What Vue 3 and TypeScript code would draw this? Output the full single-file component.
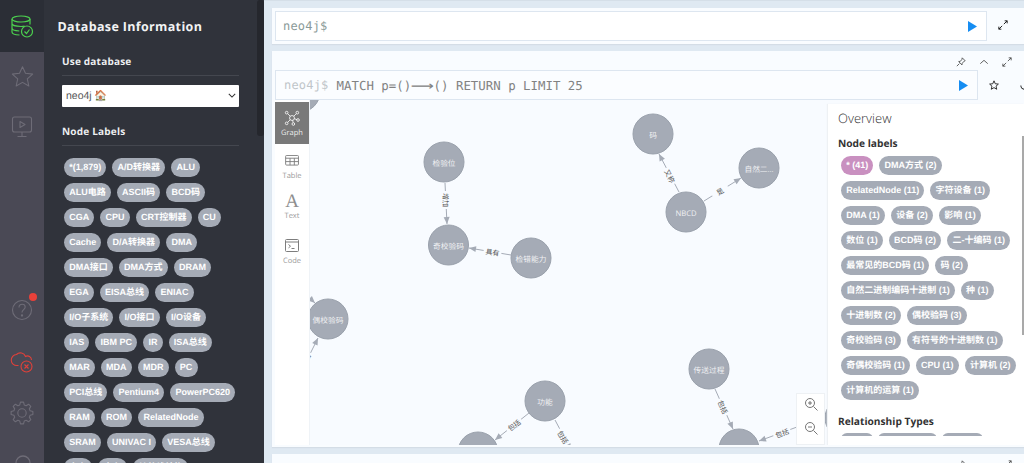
<script setup lang="ts">
const dbLabels: string[][] = [
  ['*(1,879)', 'A/D转换器', 'ALU'],
  ['ALU电路', 'ASCII码', 'BCD码'],
  ['CGA', 'CPU', 'CRT控制器', 'CU'],
  ['Cache', 'D/A转换器', 'DMA'],
  ['DMA接口', 'DMA方式', 'DRAM'],
  ['EGA', 'EISA总线', 'ENIAC'],
  ['I/O子系统', 'I/O接口', 'I/O设备'],
  ['IAS', 'IBM PC', 'IR', 'ISA总线'],
  ['MAR', 'MDA', 'MDR', 'PC'],
  ['PCI总线', 'Pentium4', 'PowerPC620'],
  ['RAM', 'ROM', 'RelatedNode'],
  ['SRAM', 'UNIVAC I', 'VESA总线'],
  ['主存', '内存', '单总线结构']
]
const overview: string[][] = [
  ['RelatedNode (11)', '字符设备 (1)'],
  ['DMA (1)', '设备 (2)', '影响 (1)'],
  ['数位 (1)', 'BCD码 (2)', '二-十编码 (1)'],
  ['最常见的BCD码 (1)', '码 (2)'],
  ['自然二进制编码十进制 (1)', '种 (1)'],
  ['十进制数 (2)', '偶校验码 (3)'],
  ['奇校验码 (3)', '有符号的十进制数 (1)'],
  ['奇偶校验码 (1)', 'CPU (1)', '计算机 (2)'],
  ['计算机的运算 (1)']
]
const nodes = [
  { x: 299, y: 92, t: '' },
  { x: 443, y: 162, t: '检验位' },
  { x: 447.5, y: 245, t: '奇校验码' },
  { x: 530, y: 258, t: '检错能力' },
  { x: 327, y: 319, t: '偶校验码' },
  { x: 544, y: 401, t: '功能' },
  { x: 477, y: 452, t: '' },
  { x: 652, y: 134, t: '码' },
  { x: 758, y: 168, t: '自然二…' },
  { x: 685, y: 212, t: 'NBCD' },
  { x: 708, y: 369, t: '传送过程' },
  { x: 738, y: 449, t: '' },
  { x: 844, y: 418, t: '' }
]
const links = [
  { x1: 444, y1: 183, x2: 446, y2: 224, lx: 444.5, ly: 200, a: 90, t: '增加' },
  { x1: 510, y1: 255, x2: 468, y2: 248, lx: 491.5, ly: 252, a: 8, t: '具有' },
  { x1: 678, y1: 192, x2: 658, y2: 154, lx: 669, ly: 176, a: 62, t: '又称' },
  { x1: 703, y1: 201, x2: 740, y2: 178, lx: 719, ly: 191, a: -32, t: '是' },
  { x1: 528, y1: 413, x2: 494, y2: 440, lx: 513, ly: 425, a: -37, t: '包括' },
  { x1: 554, y1: 420, x2: 570, y2: 450, lx: 562, ly: 437, a: 60, t: '包括' },
  { x1: 714, y1: 389, x2: 732, y2: 429, lx: 722, ly: 407, a: 66, t: '包括' },
  { x1: 796, y1: 427, x2: 758, y2: 441, lx: 781, ly: 433, a: -20, t: '包括' },
  { x1: 300, y1: 290, x2: 314, y2: 303, lx: 0, ly: 0, a: 0, t: '' },
  { x1: 306, y1: 360, x2: 317, y2: 338, lx: 304, ly: 360, a: -60, t: '包括' }
]
function head(l: { x1: number; y1: number; x2: number; y2: number }): string {
  const d = Math.hypot(l.x2 - l.x1, l.y2 - l.y1)
  const ux = (l.x2 - l.x1) / d
  const uy = (l.y2 - l.y1) / d
  const bx = l.x2 - ux * 7
  const by = l.y2 - uy * 7
  return `${l.x2},${l.y2} ${bx - uy * 3},${by + ux * 3} ${bx + uy * 3},${by - ux * 3}`
}
function gear(): string {
  const teeth = 8
  const pts: string[] = []
  for (let i = 0; i < teeth; i++) {
    const c = (i / teeth) * Math.PI * 2
    const seq: [number, number][] = [[-0.27, 8.4], [-0.14, 11], [0.14, 11], [0.27, 8.4]]
    for (const [o, r] of seq) {
      pts.push(`${(12 + r * Math.cos(c + o)).toFixed(2)} ${(12 + r * Math.sin(c + o)).toFixed(2)}`)
    }
  }
  return 'M' + pts.join('L') + 'Z'
}
const gearPath = gear()
</script>

<template>
  <div class="page">
    <nav class="rail">
      <div class="rail-top">
        <svg viewBox="0 0 24 24" width="24" height="24" fill="none" stroke="#4cd04f" stroke-width="1.2">
          <ellipse cx="11" cy="5" rx="9" ry="3" />
          <path d="M2 5v13c0 1.600 3.400 2.900 7.500 3M20 5v5.500M2 9.500c0 1.700 4 3 9 3 1.300 0 2.500-.1 3.600-.3M2 14c0 1.600 3.300 2.800 7.300 3" />
          <circle cx="17" cy="17.500" r="5.500" />
          <path d="M14.500 17.500l2 2 3-4" />
        </svg>
      </div>
      <div class="rail-btn rail-star">
        <svg viewBox="0 0 24 24" width="23" height="23" fill="none" stroke="#6e6c77" stroke-width="1.100" stroke-linejoin="round">
          <path d="M12 1.800l3.100 6.900 7.500.8-5.600 5 1.600 7.400L12 18.100l-6.600 3.800L7 14.500l-5.600-5 7.500-.8z" />
        </svg>
      </div>
      <div class="rail-btn rail-play">
        <svg viewBox="0 0 24 24" width="24" height="24" fill="none" stroke="#6e6c77" stroke-width="1.100" stroke-linejoin="round">
          <rect x="2.500" y="2" width="19" height="15" rx="2" />
          <path d="M10 6.500l5 3-5 3zM12 17v4M7.500 21.500h9" />
        </svg>
      </div>
      <div class="rail-space"></div>
      <div class="rail-btn rail-help">
        <svg viewBox="0 0 24 24" width="24" height="24" fill="none" stroke="#6e6c77" stroke-width="1.100">
          <circle cx="12" cy="12" r="9.500" />
          <path d="M9 9.500c0-2 1.400-3.200 3.200-3.200 1.800 0 3 1.200 3 2.800 0 2.500-3.200 2.500-3.200 5.300" />
          <circle cx="12" cy="17.500" r=".6" />
        </svg>
        <span class="dot"></span>
      </div>
      <div class="rail-btn rail-cloud">
        <svg viewBox="0 0 24 24" width="24" height="24" fill="none" stroke="#e0413a" stroke-width="1.100">
          <path d="M8.500 15.500H7a5.500 5.500 0 0 1-.5-11A5.500 5.500 0 0 1 15.500 6.500a4 4 0 0 1 6 3.500" />
          <circle cx="16.500" cy="16.500" r="5.500" />
          <path d="M14.500 14.500l4 4M18.500 14.500l-4 4" />
        </svg>
      </div>
      <div class="rail-btn rail-gear">
        <svg viewBox="0 0 24 24" width="24" height="24" fill="none" stroke="#6e6c77" stroke-width="1.100" stroke-linejoin="round">
          <circle cx="12" cy="12" r="4.200" />
          <path :d="gearPath" />
        </svg>
      </div>
      <div class="rail-btn rail-search">
        <svg viewBox="0 0 24 24" width="24" height="24" fill="none" stroke="#6e6c77" stroke-width="1.300">
          <circle cx="13" cy="9" r="7" />
          <path d="M8 14l-6 7" />
        </svg>
      </div>
    </nav>

    <aside class="drawer">
      <h1 class="drawer-title">Database Information</h1>
      <h2 class="drawer-h">Use database</h2>
      <div class="select"><span>neo4j 🏠</span>
        <svg viewBox="0 0 10 6" width="8" height="5" fill="none" stroke="#333" stroke-width="1.300"><path d="M1 1l4 4 4-4" /></svg>
      </div>
      <h2 class="drawer-h second">Node Labels</h2>
      <div class="rows">
        <div v-for="(row, i) in dbLabels" :key="i" class="row">
          <span v-for="l in row" :key="l" class="pill">{{ l }}</span>
        </div>
      </div>
      <span class="drawer-scroll"></span>
    </aside>

    <main class="stream">
      <section class="frame frame-top">
        <div class="editor">
          <span class="prompt dark">neo4j$</span>
          <svg class="run" viewBox="0 0 10 12" width="9" height="11"><path d="M0 0l10 6-10 6z" fill="#168df2" /></svg>
        </div>
        <svg class="expand-top" viewBox="0 0 12 12" width="10" height="10" fill="none" stroke="#222" stroke-width="1.200"><path d="M7 5l4-4M8 1h3v3M5 7l-4 4M1 8v3h3" /></svg>
      </section>

      <section class="frame frame-main">
        <div class="acts">
          <svg viewBox="0 0 12 12" width="10" height="10" fill="none" stroke="#444" stroke-width="1"><path d="M7.500 1l3.500 3.500-1.200.5-2.300 2.500-.3 2-4-4 2-.3L7 3z M4 8l-3 3" /></svg>
          <svg viewBox="0 0 12 12" width="10" height="10" fill="none" stroke="#444" stroke-width="1"><path d="M1.500 8l4.500-4 4.500 4" /></svg>
          <svg viewBox="0 0 12 12" width="10" height="10" fill="none" stroke="#444" stroke-width="1"><path d="M7 5l4-4M8 1h3v3M5 7l-4 4M1 8v3h3" /></svg>
        </div>
        <div class="edit-row">
          <div class="editor main-ed">
            <span class="prompt">neo4j$</span>
            <span class="query">MATCH p=()<span class="arrow">⟶</span>() RETURN p LIMIT 25</span>
            <svg class="run" viewBox="0 0 10 12" width="9" height="11"><path d="M0 0l10 6-10 6z" fill="#168df2" /></svg>
          </div>
          <svg class="ed-star" viewBox="0 0 24 24" width="10" height="10" fill="none" stroke="#222" stroke-width="2.200" stroke-linejoin="round"><path d="M12 2l3 7 7.500.8-5.600 5 1.600 7.400L12 18.300l-6.500 3.900L7.100 14.800l-5.600-5L9 9z" /></svg>
          <svg class="ed-redo" viewBox="0 0 12 12" width="11" height="11" fill="none" stroke="#222" stroke-width="1.100"><path d="M2 6a4 4 0 1 0 8 0" /></svg>
        </div>
        <div class="result">
          <div class="tabs">
            <div class="tab tab-graph active">
              <svg viewBox="0 0 24 24" width="16" height="16" fill="none" stroke="#fff" stroke-width="1.200">
                <circle cx="12" cy="12" r="3.700" /><circle cx="4" cy="4" r="2" /><circle cx="20" cy="4" r="2" /><circle cx="4" cy="20" r="2" /><circle cx="14" cy="21" r="2" /><circle cx="21" cy="15" r="2" />
                <path d="M5.500 5.500l4 4M18.500 5.500l-4 4M5.500 18.500l4-4M13 15.500l.7 3.500M15.500 13l4 1.500" />
              </svg>
              <span>Graph</span>
            </div>
            <div class="tab tab-table">
              <svg viewBox="0 0 16 12" width="15" height="11" fill="none" stroke="#7d7d7d" stroke-width="1"><rect x=".5" y=".5" width="14" height="10.500" rx="1" /><path d="M.5 3.500h14M.5 7.200h14M5.300 3.500V11M10 3.500V11" /></svg>
              <span>Table</span>
            </div>
            <div class="tab tab-text">
              <span class="big-a">A</span>
              <span>Text</span>
            </div>
            <div class="tab tab-code">
              <svg viewBox="0 0 14 13" width="14" height="13" fill="none" stroke="#7d7d7d" stroke-width="1"><rect x=".5" y=".5" width="13" height="12" rx="1" /><path d="M.5 3h13M3.500 5.500l2 1.700-2 1.700M6.500 9.500h3" /></svg>
              <span>Code</span>
            </div>
          </div>
          <div class="graph">
            <svg class="graph-svg" viewBox="275 100 749 345" width="749" height="345">
              <g v-for="(l, i) in links" :key="'l' + i">
                <line :x1="l.x1" :y1="l.y1" :x2="l.x2" :y2="l.y2" stroke="#a5abb6" stroke-width="1" />
                <polygon :points="head(l)" fill="#a5abb6" />
                <g v-if="l.t" :transform="`translate(${l.lx} ${l.ly}) rotate(${l.a})`">
                  <rect x="-9" y="-5" width="18" height="10" fill="#f8fbff" />
                  <text class="rel" text-anchor="middle" y="3">{{ l.t }}</text>
                </g>
              </g>
              <g v-for="(n, i) in nodes" :key="'n' + i">
                <circle :cx="n.x" :cy="n.y" r="20" fill="#a5abb6" stroke="#9aa1ac" stroke-width="1" />
                <text class="node" :x="n.x" :y="n.y + 3.500" text-anchor="middle">{{ n.t }}</text>
              </g>
            </svg>
            <div class="zoom-box">
              <svg viewBox="0 0 14 14" width="14" height="14" fill="none" stroke="#666" stroke-width=".9"><circle cx="6" cy="6" r="4.500" /><path d="M9.500 9.500l4 4M4 6h4M6 4v4" /></svg>
              <svg viewBox="0 0 14 14" width="14" height="14" fill="none" stroke="#666" stroke-width=".9"><circle cx="6" cy="6" r="4.500" /><path d="M9.500 9.500l4 4M4 6h4" /></svg>
            </div>
            <div class="overview">
              <div class="ov-title">Overview</div>
              <div class="ov-h">Node labels</div>
              <div class="rows ov-rows">
                <div class="row">
                  <span class="pill pink">* (41)</span>
                  <span class="pill">DMA方式 (2)</span>
                </div>
                <div v-for="(row, i) in overview" :key="i" class="row">
                  <span v-for="l in row" :key="l" class="pill">{{ l }}</span>
                </div>
              </div>
              <div class="ov-h rel-h">Relationship Types</div>
              <div class="ov-clip">
                <span class="stub w1"></span><span class="stub w2"></span><span class="stub w3"></span>
              </div>
              <span class="ov-scroll"></span>
            </div>
          </div>
        </div>
      </section>

      <section class="frame frame-next">
        <div class="acts next-acts">
          <svg viewBox="0 0 12 12" width="10" height="10" fill="none" stroke="#444" stroke-width="1"><path d="M7.500 1l3.500 3.500-1.200.5-2.300 2.500-.3 2-4-4 2-.3L7 3z M4 8l-3 3" /></svg>
          <svg viewBox="0 0 12 12" width="10" height="10" fill="none" stroke="#444" stroke-width="1"><path d="M1.500 8l4.500-4 4.500 4" /></svg>
          <svg viewBox="0 0 12 12" width="10" height="10" fill="none" stroke="#444" stroke-width="1"><path d="M7 5l4-4M8 1h3v3M5 7l-4 4M1 8v3h3" /></svg>
        </div>
      </section>
    </main>
  </div>
</template>

<style>
html, body { margin: 0; overflow: hidden; }
</style>

<style scoped>
.page {
  width: 1024px; height: 463px; display: flex; overflow: hidden;
  font-family: "Open Sans", "Noto Sans CJK SC", sans-serif; background: #dfe9f2;
  text-rendering: geometricPrecision;
}
.rail { width: 44px; flex: none; background: #4a4955; display: flex; flex-direction: column; align-items: center; overflow: hidden; }
.rail-top { width: 100%; height: 52px; flex: none; background: #2b2e36; display: flex; align-items: center; justify-content: center; }
.rail-btn { flex: none; width: 100%; display: flex; align-items: center; justify-content: center; position: relative; box-sizing: border-box; }
.rail-star { height: 48px; }
.rail-play { height: 50px; padding-top: 4px; }
.rail-space { height: 131px; flex: none; }
.rail-help { height: 58px; }
.rail-cloud { height: 46px; }
.rail-gear { height: 56px; }
.rail-search { height: 37px; align-items: flex-start; padding-top: 13px; }
.dot { position: absolute; left: 29px; top: 12px; width: 8px; height: 8px; border-radius: 50%; background: #e8413a; }

.drawer { width: 220px; flex: none; background: #30333b; color: #fff; position: relative; padding: 0 0 0 18px; box-sizing: border-box; overflow: hidden; }
.drawer-title { margin: 18px 0 0 -4.500px; font-size: 12.500px; line-height: 18px; font-weight: 700; letter-spacing: .35px; color: #f2f3f4; }
.drawer-h { margin: 18px 0 0; width: 177px; font-size: 10px; line-height: 14px; padding-bottom: 7px; border-bottom: 1px solid #44474f; font-weight: 700; letter-spacing: .2px; color: #eceef0; }
.drawer-h.second { margin-top: 17px; }
.select { width: 177px; height: 21.500px; margin-top: 9px; background: #fff; color: #555; font-size: 10.500px; display: flex; align-items: center; justify-content: space-between; padding: 0 3px 0 4px; box-sizing: border-box; font-family: "Liberation Sans", "Noto Sans CJK SC", sans-serif; border-radius: 1px; }
.rows { display: flex; flex-direction: column; gap: 6px; margin: 12px 0 0 2px; }
.row { display: flex; gap: 6px; height: 19px; }
.pill { height: 19px; line-height: 19px; padding: 0 5.200px; border-radius: 10px; background: #a5abb6; color: #fff; font-family: "Liberation Sans", "Noto Sans CJK SC", sans-serif; font-size: 9px; font-weight: 700; white-space: nowrap; }
.pink { background: #c990c0; }
.drawer-scroll { position: absolute; right: 0; top: 0; width: 7px; height: 136px; background: #25272d; border-radius: 3px; }

.stream { flex: 1; min-width: 0; padding: 8px 0 0 8px; display: flex; flex-direction: column; gap: 7px; box-sizing: border-box; border-top: 1px solid #d5dfe8; }
.frame { background: #f9fcff; box-shadow: 0 1px 1px #d4dde6; flex: none; position: relative; }
.frame-top { height: 36px; margin-top: -1px; padding: 3px 0 0 3px; box-sizing: border-box; display: flex; align-items: flex-start; }
.editor { background: #fff; border: 1px solid #dde6f0; box-sizing: border-box; display: flex; align-items: center; flex: none; font-family: "DejaVu Sans Mono", monospace; font-size: 12px; color: #7f8c8a; }
.frame-top .editor { width: 712px; height: 30px; padding-left: 7px; }
.prompt.dark { color: #8a9a98; }
.prompt { color: #bfc5c9; letter-spacing: .2px; }
.query { margin-left: 8px; color: #828282; font-size: 12.400px; white-space: nowrap; }
.arrow { display: inline-block; width: 22.400px; text-align: center; font-family: "DejaVu Sans", sans-serif; transform: scaleX(1.300); }
.run { margin-left: auto; }
.frame-top .run { margin-right: 9px; }
.expand-top { margin: 9px 0 0 11px; flex: none; }
.frame-main { height: 396px; padding: 3px 0 0 3px; box-sizing: border-box; overflow: hidden; }
.acts { display: flex; gap: 13px; justify-content: flex-end; height: 16px; align-items: center; padding-right: 12px; }
.edit-row { display: flex; align-items: center; height: 30px; overflow: hidden; }
.main-ed { width: 703px; height: 30px; padding-left: 8px; background: #fbfdff; }
.main-ed .run { margin-right: 9px; }
.ed-star { margin-left: 11px; flex: none; }
.ed-redo { margin-left: 20px; flex: none; }
.result { display: flex; height: 345px; }
.tabs { width: 35px; flex: none; background: #fff; border-right: 1px solid #eff3f7; box-sizing: border-box; padding-top: 2px; color: #9a9a9a; }
.tab { display: flex; flex-direction: column; align-items: center; height: 42px; font-size: 7.500px; line-height: 9px; box-sizing: border-box; }
.tab.active { background: #797979; color: #ececec; }
.tab-graph { padding-top: 8px; gap: 3px; }
.tab-table { padding-top: 11px; gap: 6px; }
.tab-text { padding-top: 6px; gap: 1px; }
.tab-code { padding-top: 11px; gap: 5px; }
.big-a { font-family: "Liberation Serif", serif; font-size: 19px; line-height: 19px; color: #8e8e8e; }
.graph { flex: 1; min-width: 0; position: relative; overflow: hidden; background: #f8fbff; }
.graph-svg { position: absolute; left: -34px; top: 0; display: block; }
.node { font-size: 7.700px; fill: #f0f1f3; font-family: "Open Sans", "Noto Sans CJK SC", sans-serif; }
.rel { font-size: 7px; fill: #555; font-family: "Open Sans", "Noto Sans CJK SC", sans-serif; }
.zoom-box { position: absolute; left: 486px; top: 293px; width: 29px; height: 52px; background: #fff; border: 1px solid #eef1f4; box-sizing: border-box; display: flex; flex-direction: column; align-items: center; gap: 10px; padding-top: 3px; }
.overview { position: absolute; left: 518px; top: 4px; right: 0; bottom: 0; background: #fff; padding: 6px 0 0 10px; box-sizing: border-box; overflow: hidden; box-shadow: -1px 0 1px #eef1f4; }
.ov-title { font-size: 13px; line-height: 16px; font-weight: 300; color: #333; }
.ov-h { font-size: 10.200px; line-height: 14px; font-weight: 700; color: #333; margin-top: 10px; }
.ov-rows { margin: 6px 0 0 3px; }
.rel-h { margin-top: 14px; }
.ov-clip { margin: 5px 0 0 3px; height: 3px; overflow: hidden; display: flex; gap: 5px; }
.stub { height: 19px; flex: none; border-radius: 6px 6px 0 0; background: #a5abb6; }
.w1 { width: 32px; } .w2 { width: 59px; } .w3 { width: 41px; }
.ov-scroll { position: absolute; right: 0; top: 32px; width: 2px; height: 199px; background: #a9a9a9; }
.frame-next { height: 20px; padding-top: 3px; box-sizing: border-box; }
</style>
